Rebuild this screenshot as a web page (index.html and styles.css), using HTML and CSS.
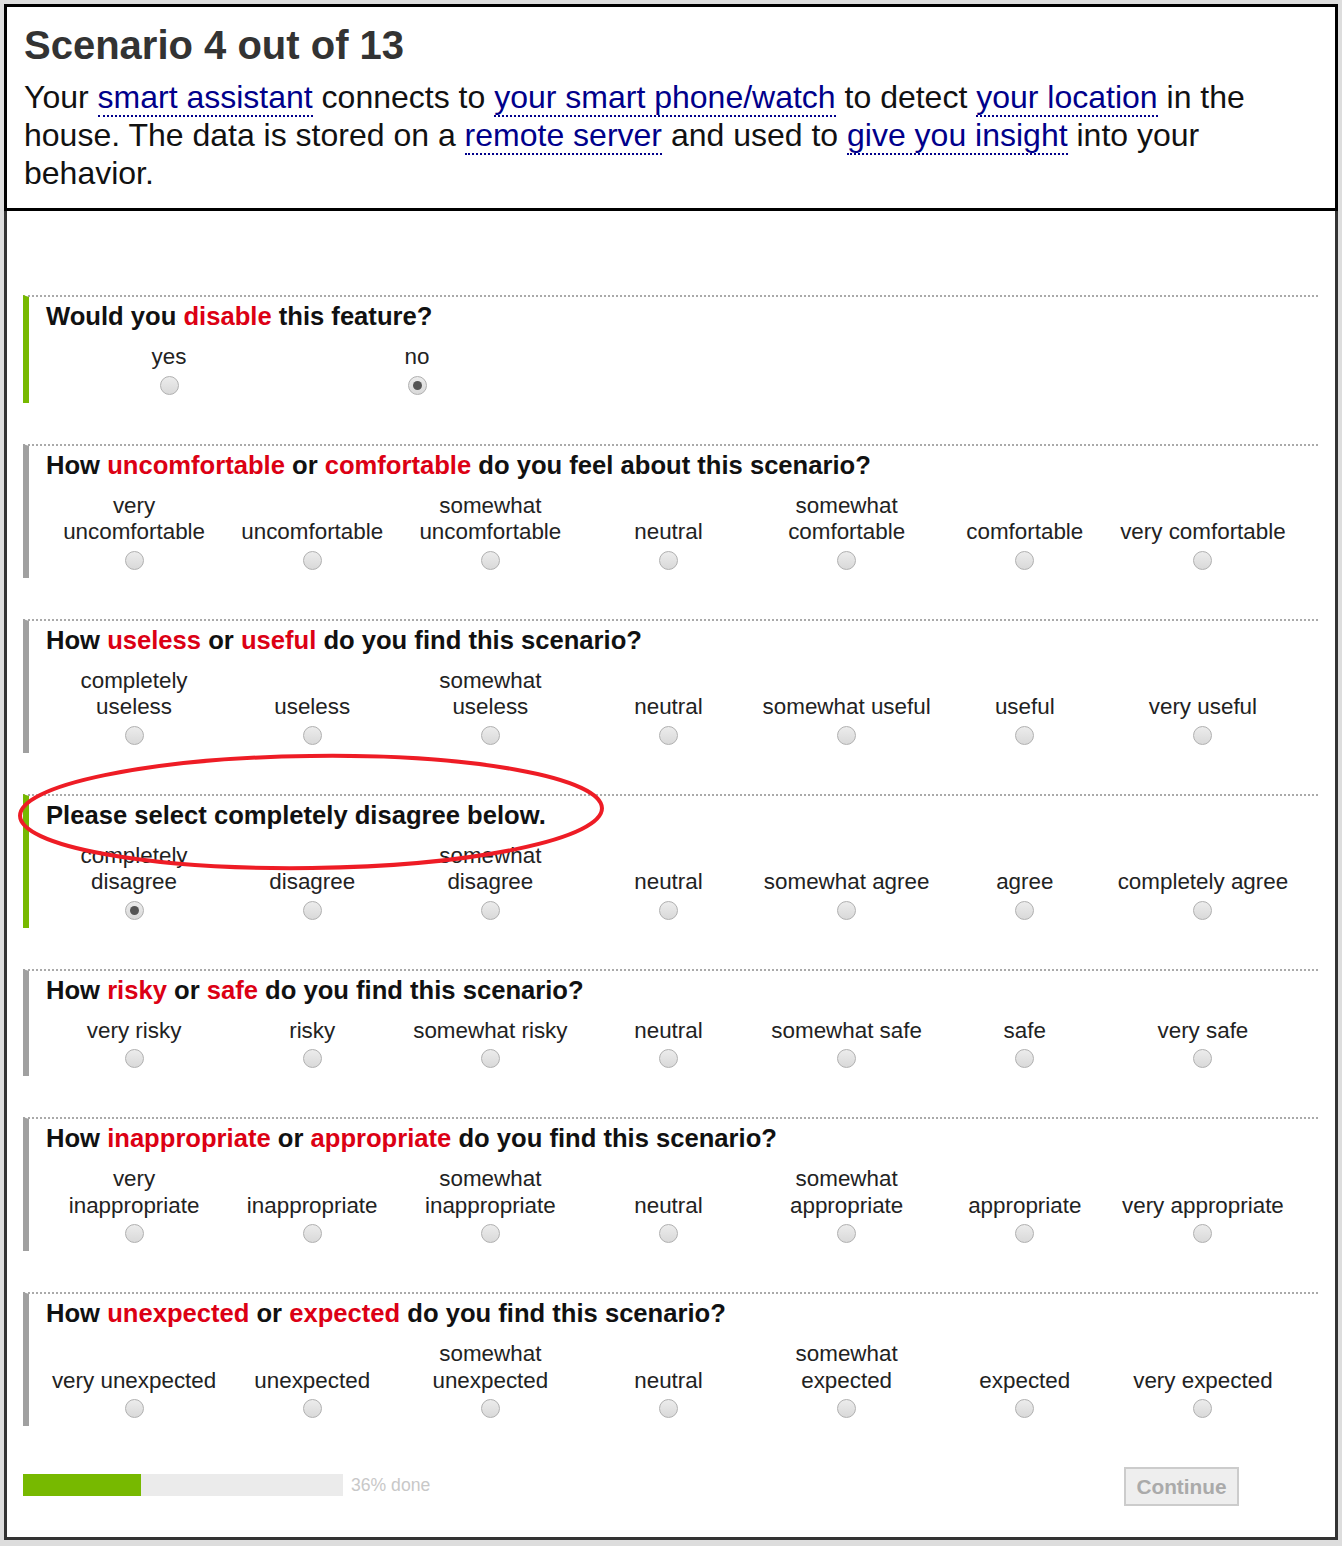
FILE: index.html
```html
<!DOCTYPE html>
<html lang="en">
<head>
<meta charset="utf-8">
<title>Scenario 4 out of 13</title>
<link rel="stylesheet" href="styles.css">
</head>
<body>
<div class="page">
  <header class="scenario">
    <h1 class="scenario-title">Scenario 4 out of 13</h1>
    <p class="scenario-text">Your <span class="term">smart assistant</span> connects to <span class="term">your smart phone/watch</span> to detect <span class="term">your location</span> in the house. The data is stored on a <span class="term">remote server</span> and used to <span class="term">give you insight</span> into your behavior.</p>
  </header>

  <main class="questions">
    <section class="question answered">
      <h2 class="q-title">Would you <em>disable</em> this feature?</h2>
      <div class="options two">
        <label class="opt"><span class="opt-label">yes</span><input type="radio" name="q1"></label>
        <label class="opt"><span class="opt-label">no</span><input type="radio" name="q1" checked></label>
      </div>
    </section>

    <section class="question">
      <h2 class="q-title">How <em>uncomfortable</em> or <em>comfortable</em> do you feel about this scenario?</h2>
      <div class="options">
        <label class="opt"><span class="opt-label">very<br>uncomfortable</span><input type="radio" name="q2"></label>
        <label class="opt"><span class="opt-label">uncomfortable</span><input type="radio" name="q2"></label>
        <label class="opt"><span class="opt-label">somewhat<br>uncomfortable</span><input type="radio" name="q2"></label>
        <label class="opt"><span class="opt-label">neutral</span><input type="radio" name="q2"></label>
        <label class="opt"><span class="opt-label">somewhat<br>comfortable</span><input type="radio" name="q2"></label>
        <label class="opt"><span class="opt-label">comfortable</span><input type="radio" name="q2"></label>
        <label class="opt"><span class="opt-label">very comfortable</span><input type="radio" name="q2"></label>
      </div>
    </section>

    <section class="question">
      <h2 class="q-title">How <em>useless</em> or <em>useful</em> do you find this scenario?</h2>
      <div class="options">
        <label class="opt"><span class="opt-label">completely<br>useless</span><input type="radio" name="q3"></label>
        <label class="opt"><span class="opt-label">useless</span><input type="radio" name="q3"></label>
        <label class="opt"><span class="opt-label">somewhat<br>useless</span><input type="radio" name="q3"></label>
        <label class="opt"><span class="opt-label">neutral</span><input type="radio" name="q3"></label>
        <label class="opt"><span class="opt-label">somewhat useful</span><input type="radio" name="q3"></label>
        <label class="opt"><span class="opt-label">useful</span><input type="radio" name="q3"></label>
        <label class="opt"><span class="opt-label">very useful</span><input type="radio" name="q3"></label>
      </div>
    </section>

    <section class="question answered attention">
      <h2 class="q-title">Please select completely disagree below.</h2>
      <div class="options">
        <label class="opt"><span class="opt-label">completely<br>disagree</span><input type="radio" name="q4" checked></label>
        <label class="opt"><span class="opt-label">disagree</span><input type="radio" name="q4"></label>
        <label class="opt"><span class="opt-label">somewhat<br>disagree</span><input type="radio" name="q4"></label>
        <label class="opt"><span class="opt-label">neutral</span><input type="radio" name="q4"></label>
        <label class="opt"><span class="opt-label">somewhat agree</span><input type="radio" name="q4"></label>
        <label class="opt"><span class="opt-label">agree</span><input type="radio" name="q4"></label>
        <label class="opt"><span class="opt-label">completely agree</span><input type="radio" name="q4"></label>
      </div>
      <svg class="annotation" width="600" height="130" viewBox="0 0 600 130" aria-hidden="true">
        <ellipse cx="300" cy="65" rx="291" ry="56" transform="rotate(-0.75 300 65)" fill="none" stroke="#ee1c25" stroke-width="4"/>
      </svg>
    </section>

    <section class="question">
      <h2 class="q-title">How <em>risky</em> or <em>safe</em> do you find this scenario?</h2>
      <div class="options">
        <label class="opt"><span class="opt-label">very risky</span><input type="radio" name="q5"></label>
        <label class="opt"><span class="opt-label">risky</span><input type="radio" name="q5"></label>
        <label class="opt"><span class="opt-label">somewhat risky</span><input type="radio" name="q5"></label>
        <label class="opt"><span class="opt-label">neutral</span><input type="radio" name="q5"></label>
        <label class="opt"><span class="opt-label">somewhat safe</span><input type="radio" name="q5"></label>
        <label class="opt"><span class="opt-label">safe</span><input type="radio" name="q5"></label>
        <label class="opt"><span class="opt-label">very safe</span><input type="radio" name="q5"></label>
      </div>
    </section>

    <section class="question">
      <h2 class="q-title">How <em>inappropriate</em> or <em>appropriate</em> do you find this scenario?</h2>
      <div class="options">
        <label class="opt"><span class="opt-label">very<br>inappropriate</span><input type="radio" name="q6"></label>
        <label class="opt"><span class="opt-label">inappropriate</span><input type="radio" name="q6"></label>
        <label class="opt"><span class="opt-label">somewhat<br>inappropriate</span><input type="radio" name="q6"></label>
        <label class="opt"><span class="opt-label">neutral</span><input type="radio" name="q6"></label>
        <label class="opt"><span class="opt-label">somewhat<br>appropriate</span><input type="radio" name="q6"></label>
        <label class="opt"><span class="opt-label">appropriate</span><input type="radio" name="q6"></label>
        <label class="opt"><span class="opt-label">very appropriate</span><input type="radio" name="q6"></label>
      </div>
    </section>

    <section class="question">
      <h2 class="q-title">How <em>unexpected</em> or <em>expected</em> do you find this scenario?</h2>
      <div class="options">
        <label class="opt"><span class="opt-label">very unexpected</span><input type="radio" name="q7"></label>
        <label class="opt"><span class="opt-label">unexpected</span><input type="radio" name="q7"></label>
        <label class="opt"><span class="opt-label">somewhat<br>unexpected</span><input type="radio" name="q7"></label>
        <label class="opt"><span class="opt-label">neutral</span><input type="radio" name="q7"></label>
        <label class="opt"><span class="opt-label">somewhat<br>expected</span><input type="radio" name="q7"></label>
        <label class="opt"><span class="opt-label">expected</span><input type="radio" name="q7"></label>
        <label class="opt"><span class="opt-label">very expected</span><input type="radio" name="q7"></label>
      </div>
    </section>

    <footer class="footer">
      <div class="progress">
        <div class="progress-track"><div class="progress-fill" style="width: 118px"></div></div>
        <span class="progress-text">36% done</span>
      </div>
      <button class="continue" type="button" disabled>Continue</button>
    </footer>
  </main>
</div>
</body>
</html>
```

FILE: styles.css
```css
html, body {
  background: #dddddd;
}

body {
  margin: 4px;
  font-family: "Liberation Sans", Arial, sans-serif;
  color: #111;
}

.page {
  width: 1328px;
  height: 1533px;
  background: #fff;
  border: 3px solid #333;
  border-top: 0;
  display: flex;
  flex-direction: column;
}

.scenario {
  margin: 0 -3px;
  border: 3px solid #000;
  padding: 15px 17px 16px 17px;
  background: #fff;
}

.scenario-title {
  margin: 0;
  font-size: 40px;
  line-height: 46px;
  font-weight: bold;
  color: #333;
}

.scenario-text {
  margin: 10px 0 0 0;
  font-size: 32px;
  line-height: 38px;
  color: #111;
}

.term {
  color: #00008b;
  border-bottom: 2px dotted #00008b;
}

.questions {
  padding: 84px 17px 0 16px;
  flex: 1;
  display: flex;
  flex-direction: column;
}

.question {
  position: relative;
  border-top: 2px dotted #aaa;
  border-left: 6px solid #a0a0a0;
  padding: 4px 0 8px 0;
  margin-bottom: 41px;
}

.question.answered {
  border-left-color: #77b900;
}

.q-title {
  margin: 0 0 13px 0;
  padding-left: 17px;
  font-size: 25.6px;
  line-height: 30px;
  font-weight: bold;
  color: #111;
}

.q-title em {
  font-style: normal;
  color: #dc0014;
}

.options {
  margin-left: 16px;
  width: 1247px;
  display: grid;
  grid-template-columns: repeat(7, 1fr);
  align-items: end;
}

.options.two {
  grid-template-columns: repeat(2, 248px);
}

.opt {
  display: flex;
  flex-direction: column;
  align-items: center;
  text-align: center;
  font-size: 22.4px;
  line-height: 26.5px;
  color: #222;
}

.opt-label {
  white-space: nowrap;
}

.opt input {
  appearance: none;
  -webkit-appearance: none;
  margin: 5px 0 0 0;
  width: 19px;
  height: 19px;
  border-radius: 50%;
  border: 1px solid #b0b0b0;
  background: linear-gradient(#ececec, #d9d9d9);
  box-sizing: border-box;
  display: grid;
  place-items: center;
}

.opt input:checked::after {
  content: "";
  width: 9px;
  height: 9px;
  border-radius: 50%;
  background: #555;
}

.annotation {
  position: absolute;
  left: -18px;
  top: -49px;
  pointer-events: none;
}

.footer {
  display: flex;
  align-items: flex-start;
  padding-right: 79px;
}

.progress {
  display: flex;
  align-items: center;
  margin-top: 7px;
}

.progress-track {
  width: 320px;
  height: 22px;
  background: #ebebeb;
}

.progress-fill {
  height: 100%;
  background: #77b900;
}

.progress-text {
  margin-left: 8px;
  font-size: 17.6px;
  color: #c8c8c8;
}

.continue {
  margin-left: auto;
  width: 115px;
  height: 39px;
  background: #eeeeee;
  border: 2px solid #cccccc;
  font-family: "Liberation Sans", Arial, sans-serif;
  font-size: 20.8px;
  font-weight: bold;
  color: #aaaaaa;
  padding: 0;
}
```
